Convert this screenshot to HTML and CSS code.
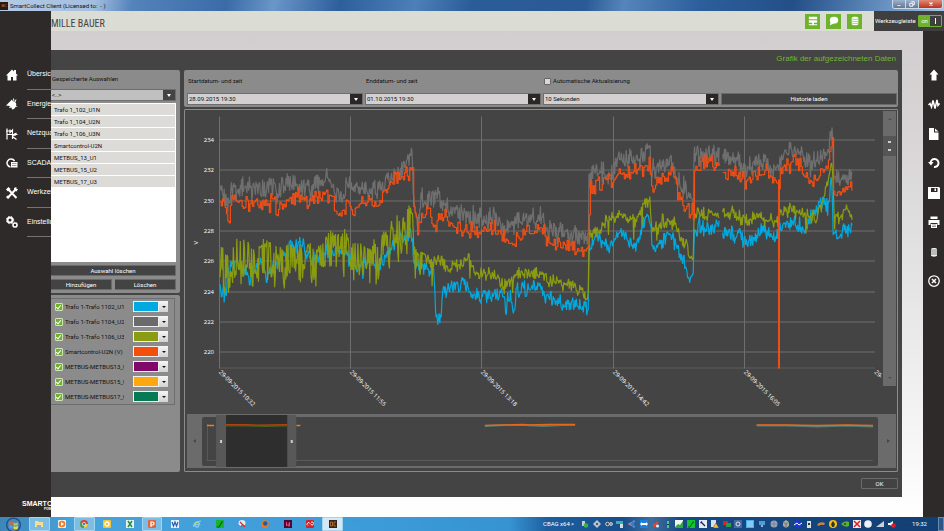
FILE: index.html
```html
<!DOCTYPE html>
<html lang="de">
<head>
    <meta charset="UTF-8">
    <meta name="viewport" content="width=device-width, initial-scale=1.0">
    <title>SmartCollect Client</title>
    <link rel="stylesheet" href="styles.css">
</head>
<body>
    <div class="titlebar">
        <span class="app-icon">BC</span>
        <span class="app-title">SmartCollect Client (Licensed to: &nbsp;- )</span>
        <div class="window-buttons">
            <button class="win-btn" aria-label="Minimieren"><svg viewBox="0 0 8 8"><path d="M1 5h6v2H1z" fill="#fff" stroke="#333" stroke-width=".5"/></svg></button>
            <button class="win-btn" aria-label="Wiederherstellen"><svg viewBox="0 0 8 8"><path d="M3 1h4v4H5M1 3h4v4H1z" fill="none" stroke="#fff" stroke-width="1.2"/></svg></button>
            <button class="win-btn win-close" aria-label="Schließen"><svg viewBox="0 0 8 8"><path d="M2 2l4 4M6 2L2 6" stroke="#fff" stroke-width="1.6"/></svg></button>
        </div>
    </div>

    <div class="app">
        <nav class="sidebar">
            <ul class="nav">
                <li><svg viewBox="0 0 24 24"><path d="M12 1L0 13h3v10h7v-7h4v7h7V13h3l-4-4V2h-4v3z" fill="#fff"/></svg><a href="#">Übersicht</a></li>
                <li><svg viewBox="0 0 24 24"><path d="M0 15L12 3l2 4c5 0 8 4 6 9l4 1-5 1c-1 3-4 5-7 5l-1-4-5 1 2-4z" fill="#fff"/><path d="M15 1l1 6M20 3l-2 5" stroke="#fff" stroke-width="2"/></svg><a href="#">Energie</a></li>
                <li><svg viewBox="0 0 24 24"><path d="M2 1v22M0 6h14M2 13h21M8 3v6l5-5v18M13 17l8 6M21 10l-7 5M18 10v6" fill="none" stroke="#fff" stroke-width="2.4"/></svg><a href="#">Netzqualität</a></li>
                <li><svg viewBox="0 0 24 24"><path d="M9 20a8 8 0 1 1 8-12" fill="none" stroke="#fff" stroke-width="3"/><path d="M10 10h13v11H10z" fill="#fff"/><path d="M12 13h9M12 17h9" stroke="#777" stroke-width="1.4"/></svg><a href="#">SCADA</a></li>
                <li><svg viewBox="0 0 24 24"><path d="M3 22L21 3M3 3l18 19" stroke="#fff" stroke-width="4"/><path d="M0 5l5-5 4 4-5 5zM16 2l5-2-1 4 4 0-3 5-5-2zM0 20l4 4 3-3-4-4z" fill="#fff"/></svg><a href="#">Werkzeuge</a></li>
                <li><svg viewBox="0 0 24 24"><circle cx="8" cy="8" r="5" fill="none" stroke="#fff" stroke-width="4"/><circle cx="18" cy="18" r="4" fill="none" stroke="#fff" stroke-width="3"/><circle cx="8" cy="8" r="7.4" fill="none" stroke="#fff" stroke-width="1.6" stroke-dasharray="3 3"/><circle cx="18" cy="18" r="5.7" fill="none" stroke="#fff" stroke-dasharray="2 2"/></svg><a href="#">Einstellungen</a></li>
            </ul>
            <div class="brand">SMARTCOLLECT<small>POWERED</small></div>
        </nav>

        <main class="content">
            <header class="header">
                <span class="logo">MILLE BAUER</span>
                <button class="head-btn" aria-label="Geräte"><svg viewBox="0 0 12 12"><path d="M1 1h10v3H1zM1 5h10v3H1zM5 8h2v2H5zM1 10h10v1H1z" fill="#fff"/></svg></button>
                <button class="head-btn" aria-label="Meldungen"><svg viewBox="0 0 12 12"><ellipse cx="6" cy="5" rx="5" ry="4" fill="#fff"/><path d="M2 7l-1 4 5-2z" fill="#fff"/></svg></button>
                <button class="head-btn" aria-label="Datenbank"><svg viewBox="0 0 12 12"><path d="M2 2.5c0-2 8-2 8 0v7c0 2-8 2-8 0z" fill="#fff"/><path d="M2 3.500q4 1.500 8 0M2 6q4 1.500 8 0M2 8.500q4 1.500 8 0" fill="none" stroke="#6fb22c" stroke-width=".7"/></svg></button>
                <div class="toolbar-switch">
                    <span>Werkzeugleiste</span>
                    <button class="toggle"><b>on</b><i></i></button>
                </div>
            </header>

            <div class="workspace">
                <section class="dialog">
                    <h1 class="dialog-title">Grafik der aufgezeichneten Daten</h1>

                    <div class="dialog-body">
                        <div class="left-col">
                            <div class="panel saved">
                                <label class="panel-label" for="saved">Gespeicherte Auswahlen</label>
                                <div class="combo combo-grey">
                                    <select id="saved"><option>&lt;..&gt;</option></select>
                                    <span class="combo-arrow"></span>
                                </div>
                                <ul class="list">
                                    <li>Trafo 1_102_U1N</li>
                                    <li>Trafo 1_104_U2N</li>
                                    <li>Trafo 1_106_U3N</li>
                                    <li>Smartcontrol-U2N</li>
                                    <li>METBUS_13_U1</li>
                                    <li>METBUS_15_U2</li>
                                    <li>METBUS_17_U3</li>
                                </ul>
                                <div class="btn-row"><button class="btn">Auswahl löschen</button></div>
                                <div class="btn-row"><button class="btn">Hinzufügen</button><button class="btn">Löschen</button></div>
                            </div>

                            <div class="panel legend-panel">
                                <div class="legend">
                                    <div class="legend-row"><input type="checkbox" id="s1" checked><label for="s1">Trafo 1-Trafo 1102_U1N</label><div class="color-combo"><select class="c-blue" aria-label="Farbe 1"></select><span></span></div></div>
                                    <div class="legend-row"><input type="checkbox" id="s2" checked><label for="s2">Trafo 1-Trafo 1104_U2N</label><div class="color-combo"><select class="c-grey" aria-label="Farbe 2"></select><span></span></div></div>
                                    <div class="legend-row"><input type="checkbox" id="s3" checked><label for="s3">Trafo 1-Trafo 1106_U3N</label><div class="color-combo"><select class="c-olive" aria-label="Farbe 3"></select><span></span></div></div>
                                    <div class="legend-row"><input type="checkbox" id="s4" checked><label for="s4">Smartcontrol-U2N (V)</label><div class="color-combo"><select class="c-orange" aria-label="Farbe 4"></select><span></span></div></div>
                                    <div class="legend-row"><input type="checkbox" id="s5" checked><label for="s5">METBUS-METBUS13_U1</label><div class="color-combo"><select class="c-purple" aria-label="Farbe 5"></select><span></span></div></div>
                                    <div class="legend-row"><input type="checkbox" id="s6" checked><label for="s6">METBUS-METBUS15_U2</label><div class="color-combo"><select class="c-amber" aria-label="Farbe 6"></select><span></span></div></div>
                                    <div class="legend-row"><input type="checkbox" id="s7" checked><label for="s7">METBUS-METBUS17_U3</label><div class="color-combo"><select class="c-green" aria-label="Farbe 7"></select><span></span></div></div>
                                </div>
                            </div>
                        </div>

                        <div class="right-col">
                            <div class="panel filters">
                                <div class="field">
                                    <label for="start">Startdatum- und zeit</label>
                                    <div class="combo"><input type="text" id="start" value="28.09.2015 19:30"><button class="combo-arrow" aria-label="Kalender"></button></div>
                                </div>
                                <div class="field">
                                    <label for="end">Enddatum- und zeit</label>
                                    <div class="combo"><input type="text" id="end" value="01.10.2015 19:30"><button class="combo-arrow" aria-label="Kalender"></button></div>
                                </div>
                                <div class="field">
                                    <label class="auto"><input type="checkbox">Automatische Aktualisierung</label>
                                    <div class="combo"><select aria-label="Intervall"><option>10 Sekunden</option></select><span class="combo-arrow"></span></div>
                                </div>
                                <div class="field field-end"><button class="btn">Historie laden</button></div>
                            </div>

                            <div class="chart-panel">
                                <div class="chart-row">
                                    <svg class="chart" id="chart" viewBox="187 112 696 302"></svg>
                                    <div class="vscroll"><i class="up"></i><div class="thumb"></div><i class="down"></i></div>
                                </div>
                                <div class="overview">
                                    <i class="arrow-left"></i>
                                    <svg viewBox="204 414 675 54" preserveAspectRatio="none">
                                        <rect x="204" y="417" width="674" height="49" rx="2" fill="#444"/>
                                        <path d="M209.500 424v36.500H873" fill="none" stroke="#5a5a5a"/>
                                        <path d="M209 425.500h7M298 425.500h4" stroke="#f07d1e" stroke-width="1.500"/>
                                        <path d="M486 426l20-1 20 0 18 1 20-1 12 0M757 425.500l30 0 30 1 30-1 26 1" fill="none" stroke="#4f7f78" stroke-width="2"/>
                                        <path d="M486 425.500l20-.5 18-.5 6 .5 20-.5 26 0M757 425l30 0 30 .5 30-.5 26 .5" fill="none" stroke="#e8661b" stroke-width="1.300"/>
                                        <rect x="228" y="415" width="62" height="52" fill="#2e2e2e"/>
                                        <path d="M228 425.500h20l20 .5 21-.5" fill="none" stroke="#47601d" stroke-width="2"/>
                                        <path d="M228 424.500h20l10 .5 31-.5" fill="none" stroke="#b2420f"/>
                                        <path d="M218 415h10v52h-10zM289 415h9v52h-9z" fill="#585858"/>
                                        <path d="M222 440h2v3h-2zM292.500 440h2v3h-2z" fill="#ccc"/>
                                    </svg>
                                    <i class="arrow-right"></i>
                                </div>
                            </div>
                        </div>
                    </div>

                    <div class="dialog-footer"><button class="btn btn-ok">OK</button></div>
                </section>
            </div>
        </main>

        <aside class="tools">
            <button aria-label="Hoch"><svg viewBox="0 0 24 24"><path d="M12 1l9 10h-4v12H7V11H3z" fill="#fff"/></svg></button>
            <button aria-label="Kurve"><svg viewBox="0 0 24 24"><path d="M1 14l3-3 3 7 3-13 4 16 4-17 2 11 3-4" fill="none" stroke="#fff" stroke-width="3"/></svg></button>
            <button aria-label="Neu"><svg viewBox="0 0 24 24"><path d="M2 0h10v9h9v15H2zM14 1l7 6h-7z" fill="#fff"/></svg></button>
            <button aria-label="Aktualisieren"><svg viewBox="0 0 24 24"><path d="M5 12a8 8 0 1 1 7 8" fill="none" stroke="#fff" stroke-width="4"/><path d="M0 10h11l-5 7z" fill="#fff"/></svg></button>
            <button aria-label="Speichern"><svg viewBox="0 0 24 24"><path d="M0 0h22l2 2v22H0z" fill="#fff"/><path d="M6 2h13v8H6z" fill="#2e2a29"/><path d="M13 3h3v5h-3z" fill="#fff"/></svg></button>
            <button aria-label="Drucken"><svg viewBox="0 0 24 24"><path d="M5 1h14v5H5zM1 8h22v10h-4v-4H5v4H1zM6 16h12v8H6z" fill="#fff"/><path d="M8 18h8M8 21h8" stroke="#2e2a29"/></svg></button>
            <button aria-label="Datenbank"><svg viewBox="0 0 24 24"><path d="M6 6c0-3 12-3 12 0v13c0 3-12 3-12 0z" fill="#eee"/><path d="M6 8h12M6 12h12M6 16h12" stroke="#666" stroke-width="1.500"/></svg></button>
            <button aria-label="Abbrechen"><svg viewBox="0 0 24 24"><circle cx="12" cy="12" r="10.500" fill="none" stroke="#fff" stroke-width="2.500"/><path d="M8 8l8 8M16 8l-8 8" stroke="#fff" stroke-width="3"/></svg></button>
        </aside>
    </div>

    <footer class="taskbar">
        <button class="start" aria-label="Start"><svg viewBox="0 0 18 16"><circle cx="9" cy="9" r="8.500" fill="#1d4f83"/><circle cx="9" cy="9" r="7" fill="#4d86b8"/><path d="M4 6q3-2 4 0v3q-2-1-4 0z" fill="#e8632c"/><path d="M9 6q2 2 5 0v3q-3 2-5 0z" fill="#a6cf3c"/><path d="M4 10q3-1 4 0v3q-2-1-4 0z" fill="#45a5e8"/><path d="M9 10q2 2 5 0v3q-3 2-5 0z" fill="#f8d53c"/></svg></button>
        <div class="tasks">
            <button class="open" aria-label="Explorer"><svg viewBox="0 0 8 8"><path d="M0 1h3l1 1h4v5H0z" fill="#f3df93"/><path d="M2 5h4v3H2z" fill="#7cb9dc"/></svg></button>
            <button aria-label="Player"><svg viewBox="0 0 8 8"><rect width="8" height="8" rx="1" fill="#eee"/><circle cx="4" cy="4" r="3.300" fill="#f08020"/><path d="M3 2l3 2-3 2z" fill="#fff"/></svg></button>
            <button class="open" aria-label="Chrome"><svg viewBox="0 0 8 8"><circle cx="4" cy="4" r="4" fill="#e03e2f"/><path d="M4 4L.5 2A4 4 0 0 0 4 8z" fill="#3fa650"/><path d="M4 4h4a4 4 0 0 1-4 4z" fill="#f8ce35"/><circle cx="4" cy="4" r="1.700" fill="#3f7ddc" stroke="#fff" stroke-width=".6"/></svg></button>
            <button aria-label="Outlook"><svg viewBox="0 0 8 8"><rect width="8" height="8" rx="1" fill="#f5c435"/><circle cx="4" cy="4" r="2" fill="none" stroke="#fff" stroke-width="1.300"/></svg></button>
            <button aria-label="Excel"><svg viewBox="0 0 8 8"><rect width="8" height="8" fill="#e8f3e8"/><path d="M2 1l4 6M6 1L2 7" stroke="#2b8a45" stroke-width="1.500"/></svg></button>
            <button class="open" aria-label="PowerPoint"><svg viewBox="0 0 8 8"><rect width="8" height="8" rx="1" fill="#e0663c"/><path d="M3 7V2h1.500a1.300 1.300 0 0 1 0 3H3" fill="none" stroke="#fff" stroke-width="1.200"/></svg></button>
            <button aria-label="Word"><svg viewBox="0 0 8 8"><rect width="8" height="8" fill="#e8effa"/><path d="M1 2l1.500 4L4 2l1.500 4L7 2" fill="none" stroke="#2b5fb4" stroke-width="1.200"/></svg></button>
            <button aria-label="Internet Explorer"><svg viewBox="0 0 8 8"><path d="M2 4.500h4.500A2.500 2.500 0 1 0 6 6" fill="none" stroke="#7fd0f5" stroke-width="1.400"/><path d="M0 7Q1 2 8 1" fill="none" stroke="#f2d34a" stroke-width=".8"/></svg></button>
            <button aria-label="Lync"><svg viewBox="0 0 8 8"><rect width="8" height="8" fill="#12b52c"/><path d="M1 7h2l3-5h1" fill="none" stroke="#075a14" stroke-width="1.200"/></svg></button>
            <button aria-label="Snipping"><svg viewBox="0 0 8 8"><ellipse cx="4" cy="3" rx="3.500" ry="3" fill="#e8e8e8"/><path d="M2 2l5 5M5 4L3 7" stroke="#c33" stroke-width="1.200"/></svg></button>
            <button aria-label="Firefox"><svg viewBox="0 0 8 8"><circle cx="4" cy="4" r="3.800" fill="#e87a1e"/><circle cx="4.300" cy="3.500" r="2.200" fill="#2d55a0"/></svg></button>
            <button aria-label="InDesign"><svg viewBox="0 0 8 8"><rect width="8" height="8" fill="#4a0a2c"/><path d="M2.500 2v4M5.500 2v4H4V4h1.500" fill="none" stroke="#e8408c"/></svg></button>
            <button aria-label="Creative Cloud"><svg viewBox="0 0 8 8"><rect width="8" height="8" rx="1" fill="#d8202c"/><path d="M2 5.500a1.500 1.500 0 1 1 2-2l1 1a1.500 1.500 0 1 0 0-2" fill="none" stroke="#fff" stroke-width=".9"/></svg></button>
            <button class="open active" aria-label="SmartCollect"><svg viewBox="0 0 8 8"><rect width="8" height="8" fill="#33241c"/><path d="M1.500 2v4h2V2zM7 2H5v4h2" fill="none" stroke="#c47a3a" stroke-width=".8"/></svg></button>
        </div>
        <div class="tray">
            <span class="tray-text">CBAG x64</span>
            <span class="tray-more">»</span>
            <div class="tray-icons">
                <svg viewBox="0 0 8 8"><path d="M1 1h3v5H1z" fill="#ccc"/><circle cx="5" cy="5.500" r="2.300" fill="#3cb043"/></svg>
                <svg viewBox="0 0 8 8"><path d="M4 0l4 4-4 4-4-4z" fill="#b9c7d4"/><circle cx="4" cy="4" r="1.200" fill="#557"/></svg>
                <svg viewBox="0 0 8 8"><circle cx="2.500" cy="4" r="1.800" fill="#444" stroke="#ccc"/><circle cx="6" cy="4" r="1.400" fill="#666" stroke="#ddd"/></svg>
                <svg viewBox="0 0 8 8"><path d="M0 1h7v3H0z" fill="#38b3ac"/><path d="M4 4h3v4H4z" fill="#d4dde0"/></svg>
                <svg viewBox="0 0 8 8"><path d="M1 4l5-3M1 4l5 3M1 4h5" stroke="#5ba2e8"/><circle cx="1.500" cy="4" r="1.200" fill="#e66"/><circle cx="6" cy="1.500" r="1.200" fill="#58d"/><circle cx="6" cy="6.500" r="1.200" fill="#58d"/></svg>
                <svg viewBox="0 0 8 8"><rect width="8" height="8" fill="#1a7fe0"/><path d="M0 4l2-2v1h4V2l2 2-2 2V5H2v1z" fill="#fff"/></svg>
                <svg viewBox="0 0 8 8"><path d="M1 6q0-3 3-3V1l3 2-2 1q-2 1-2 4z" fill="#e0482c"/><circle cx="5.500" cy="6" r="1.500" fill="#eee"/></svg>
                <svg viewBox="0 0 8 8"><path d="M3 1h2v7H3z" fill="#3cd07a"/><path d="M3 4h2v1H3z" fill="#234"/></svg>
                <svg viewBox="0 0 8 8"><rect width="8" height="8" fill="#eef5ee"/><path d="M0 7l3-3 2 1 3-4v7H0z" fill="#35a545"/></svg>
                <svg viewBox="0 0 8 8"><rect width="8" height="8" fill="#12c52c"/><path d="M1 7h2l3-5h1" fill="none" stroke="#075a14"/></svg>
                <svg viewBox="0 0 8 8"><rect width="8" height="8" fill="#e4ecf6"/><path d="M2 2l4 4M3 1.500L1.500 3" stroke="#225" stroke-width="1.300"/></svg>
                <svg viewBox="0 0 8 8"><path d="M0 0h5v7H0z" fill="#dde"/><path d="M5 3l3 5H2z" fill="#f5c435" stroke="#333" stroke-width=".4"/></svg>
                <svg viewBox="0 0 8 8"><path d="M0 1h5v4H0z" fill="#d22"/><path d="M3 3h5v4H3z" fill="#2a9a45"/></svg>
                <svg viewBox="0 0 8 8"><rect width="8" height="8" fill="#476a9c"/><circle cx="4" cy="4" r="2" fill="none" stroke="#dde"/></svg>
                <svg viewBox="0 0 8 8"><rect width="8" height="8" fill="#4ab0ea"/><path d="M1 2h6M1 4h6M1 6h6" stroke="#bfe4fa"/></svg>
                <svg viewBox="0 0 8 8"><path d="M1 1h6v4H1z" fill="#4b9dd8"/><path d="M3 5h2v2H3z" fill="#aac"/></svg>
                <svg viewBox="0 0 8 8"><circle cx="4" cy="4" r="3.500" fill="#9aa6b5"/><path d="M1 4h6M4 1v6" stroke="#68768a" stroke-width=".6"/></svg>
                <svg viewBox="0 0 8 8"><path d="M4 0l3 2v4L4 8 1 6V2z" fill="#a8a8a0"/><path d="M1 2l3 2 3-2M4 4v4" stroke="#555" stroke-width=".6" fill="none"/></svg>
                <svg viewBox="0 0 8 8"><circle cx="4" cy="4" r="3.800" fill="#1c34d8"/><path d="M0 5l3-2 2 2 3-2" fill="none" stroke="#fff"/></svg>
                <svg viewBox="0 0 8 8"><path d="M2 1h4v7H2z" fill="#ddd"/><path d="M3 3h2v2H3z" fill="#333"/></svg>
                <svg viewBox="0 0 8 8"><path d="M0 5q2-4 8-2l-1 2q-4-1-5 1z" fill="#d8862c"/></svg>
                <svg viewBox="0 0 8 8"><circle cx="4" cy="4" r="4" fill="#f5c012"/><path d="M4 1l2 3-1 3H3L2 4z" fill="#333"/></svg>
                <svg viewBox="0 0 8 8"><path d="M0 4q4-4 8-2v4q-4 2-8-2z" fill="#5fae2e"/><circle cx="4" cy="4" r="1" fill="#1d4a20"/></svg>
                <svg viewBox="0 0 8 8"><rect width="8" height="8" fill="#eee"/><path d="M1 1l6 6M7 1L1 7" stroke="#d8202c" stroke-width="1.500"/></svg>
                <svg viewBox="0 0 8 8"><circle cx="4" cy="4" r="3.800" fill="#eef2f5"/></svg>
                <svg viewBox="0 0 8 8"><path d="M0 7l8-6v6z" fill="#c5d0dc"/></svg>
                <svg viewBox="0 0 8 8"><path d="M0 3h2l3-2v6L2 5H0z" fill="#fff"/><circle cx="5.500" cy="5.500" r="2.300" fill="#d8202c"/></svg>
            </div>
            <span class="clock">19:32</span>
            <button class="show-desktop" aria-label="Desktop anzeigen"></button>
        </div>
    </footer>

    <script src="chart.js"></script>
</body>
</html>
```

FILE: styles.css
```css
* {
    box-sizing: border-box;
}
body {
    margin: 0;
    min-height: 100vh;
    display: flex;
    flex-direction: column;
    font-family: Roboto, "Open Sans", sans-serif;
    font-size: 6px;
    line-height: 8px;
    color: #111;
    background: #fff;
}
button, input, select {
    font: inherit;
    color: inherit;
    margin: 0;
    padding: 0;
    border: 0;
    border-radius: 0;
    appearance: none;
    background: none;
    min-width: 0;
}
ul {
    list-style: none;
    margin: 0;
    padding: 0;
}
svg {
    display: block;
}

/* title bar */
.titlebar {
    display: flex;
    align-items: center;
    height: 11px;
    padding-right: 1px;
    background: linear-gradient(100deg, #b4c9e4 0, #a3bfe0 10%, #5583bb 14%, #3a6ca8 24%, #6a96c8 29%, #2d5f9c 36%, #4d80b8 44%, #2a5c98 50%, #2a5b96 62%, #5585ba 66%, #2c5f9c 74%, #244f88 84%, #6f9ac8 95%, #a9c4e2 100%);
}
.app-icon {
    width: 8px;
    height: 8px;
    background: #2b1a12;
    color: #c87838;
    font-size: 4px;
    text-align: center;
}
.app-title {
    flex: 1;
    padding-left: 2px;
}
.window-buttons {
    display: flex;
    align-self: flex-start;
    height: 9px;
    border: 1px solid #ccd9e8;
    border-top: 0;
    border-radius: 0 0 3px 3px;
    overflow: hidden;
}
.win-btn {
    display: flex;
    width: 13px;
    align-items: center;
    justify-content: center;
    background: linear-gradient(#9db2cb, #60799b);
    border-right: 1px solid #ccd9e8;
}
.win-btn svg {
    width: 6px;
    height: 6px;
}
.win-close {
    width: 23px;
    border-right: 0;
    background: linear-gradient(#dd8c78, #bd3018);
}

.app {
    flex: 1;
    display: grid;
    grid-template-columns: 51px 1fr 21px;
    grid-template-rows: 20px 1fr;
}

/* sidebar */
.sidebar {
    grid-row: 1 / 3;
    display: flex;
    flex-direction: column;
    justify-content: space-between;
    padding: 49px 0 6px;
    overflow: hidden;
    background: #2e2a29;
    color: #fff;
    font-family: "Liberation Sans", sans-serif;
    font-size: 7px;
}
.nav {
    display: flex;
    flex-direction: column;
    height: 177px;
}
.nav li {
    flex: 1;
    display: flex;
    align-items: center;
    gap: 9px;
    padding-left: 6px;
}
.nav svg {
    flex: none;
    width: 12px;
    height: 12px;
}
.nav a {
    flex: 1;
    align-self: stretch;
    display: flex;
    align-items: center;
    border-bottom: 1px solid #77716f;
    color: #fff;
    text-decoration: none;
}
.brand {
    padding-left: 22px;
    font-weight: bold;
}
.brand small {
    display: block;
    padding-left: 22px;
    font-size: 3px;
    line-height: 3px;
}

.content {
    display: contents;
}

/* header */
.header {
    grid-column: 2 / 4;
    display: flex;
    align-items: center;
    background: #dbdcd4;
}
.logo {
    flex: 1;
    padding-top: 5px;
    font-family: "Liberation Sans Narrow", "Roboto Condensed", Roboto, sans-serif;
    font-size: 10px;
    line-height: 12px;
    color: #444;
}
.head-btn {
    display: flex;
    align-items: center;
    justify-content: center;
    width: 15px;
    height: 15px;
    margin-right: 6px;
    background: #6fb22c;
}
.head-btn svg {
    width: 10px;
    height: 10px;
}
.toolbar-switch {
    display: flex;
    align-items: center;
    justify-content: space-between;
    align-self: stretch;
    width: 70px;
    margin-left: 6px;
    padding: 0 2px 0 1px;
    background: #3f3f3f;
    color: #fff;
}
.toggle {
    display: flex;
    width: 24px;
    height: 12px;
    border: 1px solid #6fb22c;
    border-radius: 1px;
}
.toggle b {
    width: 11px;
    font-weight: normal;
    line-height: 10px;
    background: #6fb22c;
}
.toggle i {
    width: 1px;
    height: 6px;
    margin: 2px 0 0 5px;
    background: #fff;
}

/* dialog */
.workspace {
    display: flex;
    padding: 19px 21px 20px 0;
    background: linear-gradient(#d2cecf 0, #d6d4d4 20%, #eee 70%, #fff 100%);
}
.dialog {
    flex: 1;
    display: flex;
    flex-direction: column;
    padding: 2px 4px 8px 0;
    background: #444;
}
.dialog-title {
    margin: 0;
    padding: 1px 2px 5px;
    font-family: "Liberation Sans", sans-serif;
    font-weight: normal;
    font-size: 8px;
    line-height: 12px;
    text-align: right;
    color: #72b633;
}
.dialog-body {
    flex: 1;
    display: grid;
    grid-template-columns: 129px 1fr;
    gap: 4px;
}
.panel {
    background: #8b8b8b;
    border-radius: 2px;
}
.left-col, .right-col {
    display: flex;
    flex-direction: column;
    gap: 2px;
    min-width: 0;
}
.left-col .panel {
    border-radius: 0 2px 2px 0;
}
.saved {
    padding: 5px 4px 3px 0;
}
.panel-label {
    display: block;
    padding-left: 1px;
    margin-bottom: 6px;
}
.combo {
    display: flex;
    height: 12px;
    border: 1px solid #6e6e6e;
    background: #d2d0d0;
}
.combo input, .combo select {
    flex: 1;
    padding-left: 1px;
}
.combo-arrow {
    display: flex;
    align-items: center;
    justify-content: center;
    width: 12px;
    background: #2b2727;
}
.combo-arrow::after {
    content: "";
    border: 2px solid transparent;
    border-top: 3px solid #fff;
    border-bottom: 0;
}
.combo-grey {
    background: #c0c0c0;
    border-left: 0;
}
.combo-grey .combo-arrow {
    background: #444;
}
.list {
    height: 159px;
    margin: 2px 0 3px;
    padding: 1px 1px 0 0;
    background: #fff;
}
.list li {
    height: 11px;
    margin-bottom: 1px;
    padding-left: 3px;
    line-height: 12px;
    background: #dcdbd8;
}
.btn-row {
    display: flex;
    gap: 3px;
    margin-bottom: 3px;
}
.btn-row:last-child {
    margin-bottom: 0;
}
.btn {
    flex: 1;
    height: 11px;
    border: 1px solid #6a6a6a;
    background: #434343;
    color: #fff;
}
.btn-row .btn {
    border-left-width: 0;
}

/* legend */
.legend-panel {
    flex: 1;
    padding: 3px 5px 0 0;
}
.legend {
    padding: 0 6px 0 4px;
    border: 1px solid #6e6e6e;
    border-left: 0;
    border-radius: 1px;
}
.legend-row {
    display: flex;
    align-items: center;
    height: 15px;
}
.legend-row label {
    width: 60px;
    margin: 0 9px 0 2px;
    white-space: nowrap;
    overflow: hidden;
}
.legend-row input {
    display: flex;
    align-items: center;
    justify-content: center;
    width: 8px;
    height: 8px;
    border: 1px solid #d0e4b8;
    border-radius: 1px;
    background: #6fb22c;
}
.legend-row input:checked::after {
    content: "";
    width: 2px;
    height: 4px;
    border: solid #fff;
    border-width: 0 1px 1px 0;
    transform: rotate(40deg);
}
.color-combo {
    display: flex;
    width: 35px;
    height: 11px;
}
.color-combo select {
    width: 26px;
    border: 1px solid #f0f0f0;
}
.color-combo span {
    display: flex;
    flex: 1;
    align-items: center;
    justify-content: center;
    background: linear-gradient(#f6f6f6, #d2d2d2);
}
.color-combo span::after {
    content: "";
    border: 2px solid transparent;
    border-top-color: #111;
    border-bottom: 0;
}
.c-blue { background: #00a9e0; }
.c-grey { background: #6b6b6b; }
.c-olive { background: #8b9c10; }
.c-orange { background: #f44e0c; }
.c-purple { background: #82096c; }
.c-amber { background: #ffa70f; }
.c-green { background: #067a55; }

/* filters */
.filters {
    display: grid;
    grid-template-columns: repeat(4, 1fr);
    gap: 2px;
    padding: 7px 1px 2px 3px;
}
.field {
    display: flex;
    flex-direction: column;
    justify-content: space-between;
    height: 28px;
    min-width: 0;
}
.field label {
    padding-left: 1px;
}
.field .btn {
    flex: none;
    height: 12px;
}
.field-end {
    justify-content: flex-end;
}
.auto {
    display: flex;
    align-items: center;
    gap: 2px;
}
.auto input {
    width: 7px;
    height: 7px;
    border: 1px solid #666;
    border-radius: 1px;
    background: #d8d8d8;
}

/* chart */
.chart-panel {
    flex: 1;
    display: flex;
    flex-direction: column;
    padding: 1px 1px 3px 2px;
    border: 1px solid #8b8b8b;
    border-radius: 1px;
}
.chart-row {
    flex: 1;
    display: flex;
}
.chart {
    flex: 1;
    min-width: 0;
}
.grid {
    stroke: #6e6e6e;
    stroke-width: 1;
    fill: none;
}
.axis-text {
    font-family: "Open Sans", "Noto Sans", sans-serif;
    font-size: 6px;
    fill: #fff;
}
.series {
    fill: none;
    stroke-width: 1.2;
    stroke-linejoin: bevel;
}
.series-blue { stroke: #00a9e0; }
.series-grey { stroke: #6f6f6f; }
.series-olive { stroke: #8b9c10; }
.series-orange { stroke: #f04e14; }
.dropout {
    stroke-width: 2;
}
.vscroll {
    display: flex;
    flex-direction: column;
    align-items: center;
    width: 13px;
    margin-bottom: 28px;
    padding: 7px 0;
    background: #6b6b6b;
}
.vscroll i, .overview i {
    border: 2px solid transparent;
}
.vscroll .up {
    border-bottom-color: #505050;
    border-top: 0;
}
.vscroll .down {
    margin-top: auto;
    border-top-color: #505050;
    border-bottom: 0;
}
.thumb {
    display: flex;
    flex-direction: column;
    align-items: center;
    justify-content: space-evenly;
    align-self: stretch;
    height: 20px;
    margin-top: 16px;
    background: #555;
}
.thumb::before, .thumb::after {
    content: "";
    width: 3px;
    height: 2px;
    background: #ccc;
}
.overview {
    display: flex;
    align-items: center;
    justify-content: space-between;
    height: 54px;
    background: #6b6b6b;
}
.overview svg {
    flex: 1;
    height: 54px;
    min-width: 0;
}
.overview .arrow-left {
    margin: 0 6px 0 6px;
    border-right: 3px solid #484848;
    border-left: 0;
}
.overview .arrow-right {
    margin: 0 6px 0 8px;
    border-left: 3px solid #484848;
    border-right: 0;
}
.dialog-footer {
    display: flex;
    justify-content: flex-end;
    padding-top: 6px;
}
.btn-ok {
    flex: none;
    width: 37px;
    border-radius: 1px;
}

/* right tool strip */
.tools {
    grid-column: 3;
    grid-row: 2;
    display: flex;
    flex-direction: column;
    padding-top: 29px;
    background: #2e2a29;
}
.tools button {
    display: flex;
    align-items: center;
    justify-content: center;
    height: 30px;
    max-height: calc(236px / 8);
}
.tools svg {
    width: 12px;
    height: 12px;
}

/* taskbar */
.taskbar {
    display: flex;
    height: 14px;
    background: linear-gradient(90deg, #3d86b8 0, #49a3dc 8%, #3c9bd8 40%, #3793d2 54%, #1d5f9f 58%, #174f8c 66%, #3f6f9f 69%, #174a86 72%, #123f73 100%);
}
.start {
    width: 28px;
    padding-left: 5px;
}
.start svg {
    width: 17px;
    height: 14px;
}
.tasks {
    display: grid;
    grid-template-columns: repeat(14, 1fr);
    width: 316px;
}
.tasks button {
    display: flex;
    align-items: center;
    justify-content: center;
    margin: 0 1px;
}
.tasks .open {
    border: 1px solid #a5d4ef;
    border-radius: 1px;
    background: #7cbde5;
}
.tasks .active {
    background: #d2e8f6;
}
.tasks svg {
    width: 8px;
    height: 8px;
}
.tray {
    display: flex;
    align-items: center;
    margin-left: auto;
    color: #fff;
}
.tray-text {
    width: 28px;
}
.tray-more {
    width: 8px;
}
.tray-icons {
    display: grid;
    grid-template-columns: repeat(27, 1fr);
    justify-items: center;
    width: 319px;
}
.tray-icons svg {
    width: 8px;
    height: 8px;
}
.clock {
    width: 40px;
    padding-right: 11px;
    text-align: right;
}
.show-desktop {
    align-self: stretch;
    width: 6px;
    border: 1px solid #6a8aad;
    background: #2c5788;
}
```

FILE: chart.js
```javascript
const chart = document.getElementById('chart');
const NS = 'http://www.w3.org/2000/svg';

function add(name, attrs, text) {
    const el = document.createElementNS(NS, name);
    for (const key in attrs) el.setAttribute(key, attrs[key]);
    if (text) el.textContent = text;
    chart.appendChild(el);
}

// seeded random, so the curves are the same on each load
let seed = 7;
function rnd() {
    seed = (seed * 16807) % 2147483647;
    return seed / 2147483647;
}

// grid and axis labels
for (let i = 0; i < 8; i++) {
    const y = 140 + Math.round(i * 30.3);
    add('path', { class: 'grid', d: `M219 ${y}.5H875` });
    add('text', { class: 'axis-text', x: 214, y: y + 2, 'text-anchor': 'end' }, String(234 - i * 2));
}
add('path', { class: 'grid', d: 'M219 368.5H875', opacity: 0.6 });
['10:32', '11:55', '13:18', '14:42', '16:05'].forEach((time, i) => {
    const x = 219.5 + Math.round(i * 131.2);
    add('path', { class: 'grid', d: `M${x} 117V369` });
    add('text', { class: 'axis-text', transform: `translate(${x - 1} 373) rotate(45)` }, '29-09-2015 ' + time);
});
add('text', { class: 'axis-text', transform: 'translate(874 373) rotate(45)' }, '29-');
add('text', { class: 'axis-text', transform: 'translate(198 245) rotate(-90)' }, 'V');

const series = {
    blue: [220,290, 224,293, 228,275, 232,265, 240,265, 250,278, 260,262, 266,275, 275,265, 290,250, 300,245, 312,258, 330,252, 345,250, 350,262, 362,268, 363,286, 364,266, 370,258, 380,265, 390,250, 400,240, 408,235, 411,228, 414,262, 425,270, 432,268, 434,277, 435.5,312, 439,322, 441,315, 443,290, 450,288, 465,285, 475,295, 490,298, 505,296, 506.3,320, 507.5,297, 512,297, 513,315, 515,315, 516,292, 540,287, 546,297, 560,303, 575,306, 587,307, 588.5,310, 589,245, 600,238, 610,248, 620,232, 635,246, 648,215, 651,222, 652,250, 660,242, 672,235, 680,255, 685,265, 689,284, 691,275, 693.5,274, 694,232, 700,225, 712,233, 718,226, 722,234, 740,235, 747,246, 760,230, 775,238, 780,228, 788,222, 800,225, 805,230, 815,210, 824,198, 828,210, 831,182, 832,182, 833,234, 840,236, 846,228, 852,232],
    grey: [220,188, 228,204, 231,188, 275,189, 277,200, 280,188, 295,184, 310,188, 330,180, 336,198, 345,196, 347,185, 355,190, 380,187, 388,178, 400,170, 408,160, 412,158, 414,205, 418,228, 421,200, 425,203, 438,197, 443,208, 460,212, 478,221, 495,219, 505,230, 515,222, 540,219, 548,228, 560,234, 588.5,237, 589,178, 600,174, 613,175, 616,161, 630,160, 644,160, 649,148, 652,170, 664,162, 672,166, 680,185, 690,195, 693.5,202, 694,158, 700,154, 720,154, 735,160, 745,172, 755,162, 770,165, 779,170, 785,152, 800,152, 812,167, 820,158, 828,152, 830,132, 832,130, 833,150, 834,185, 840,182, 845,182, 850,172, 852,177],
    olive: [220,248, 222,246, 224,256, 240,243, 252,252, 262,245, 270,243, 275,253, 290,246, 308,252, 320,250, 328,238, 345,237, 350,245, 370,249, 378,245, 385,235, 395,222, 405,222, 408,212, 412,206, 414,250, 424,253, 430,263, 440,258, 448,268, 460,265, 468,257, 475,275, 490,275, 500,282, 508,286, 515,274, 540,273, 548,281, 560,284, 575,288, 583,292, 588.5,297, 589,235, 600,230, 608,220, 620,216, 635,222, 642,207, 650,201, 652,235, 658,224, 665,222, 675,225, 680,240, 684,243, 690,256, 693.5,258, 694,215, 715,214, 735,214, 745,222, 760,218, 777,223, 780,212, 790,210, 800,213, 815,218, 822,205, 826,190, 831,163, 832.5,165, 834,212, 840,220, 846,208, 852,222],
    orange: [220,204, 223,201, 227,214, 229,220, 231,201, 245,205, 275,203, 277,217, 280,204, 298,197, 310,203, 325,193, 332,197, 336,212, 345,214, 347,197, 353,212, 360,204, 380,205, 385,186, 400,178, 411,172, 412.500,168, 413.5,205, 418,234, 422,215, 430,212, 433,226, 437,222, 444,212, 447,224, 460,229, 478,231, 492,226, 502,236, 512,243, 518,234, 530,234, 543,227, 545,240, 555,245, 568,243, 575,250, 588.5,252, 589.5,190, 592,188, 600,182, 613,182, 617,174, 630,173, 644,172, 649,162, 652,190, 656,183, 665,178, 672,173, 675,185, 682,205, 690,210, 693.5,213, 694,172, 700,163, 718,164, 722,172, 740,175, 743,178, 746,187, 752,180, 768,170, 772,182, 779,182, 780,170, 795,162, 800,165, 803,177, 813,182, 820,175, 828,168, 831,145, 832.5,142, 833.5,195, 840,198, 848,190, 850,180, 852,193]
};

function levelAt(points, x) {
    for (let i = 2; i < points.length; i += 2) {
        if (x <= points[i]) {
            const part = (x - points[i - 2]) / (points[i] - points[i - 2]);
            return points[i - 1] + part * (points[i + 1] - points[i - 1]);
        }
    }
    return points[points.length - 1];
}

function draw(name, step, noise, stairs) {
    const points = series[name];
    let d = '';
    let pen = 'M';
    for (let x = 220; x <= 852.3; x += step) {
        // short recording gap
        if (x > 719.5 && x < 722.5) {
            pen = 'M';
            continue;
        }
        let y = levelAt(points, x) + (rnd() + rnd() - 1) * noise;
        if (name === 'olive' && x < 412 && rnd() < 0.45) {
            y += 14 + rnd() * 23;
        } else if (name === 'olive' && x < 435 && rnd() < 0.3) {
            y += 8 + rnd() * 22;
        } else if (name === 'olive' && rnd() < 0.02) {
            y += 16;
        } else if (name === 'blue' && x < 228) {
            y += (rnd() - 0.5) * 22;
        }
        const yy = y.toFixed(1);
        d += stairs && pen === 'L' ? `H${x.toFixed(1)}V${yy}` : `${pen}${x.toFixed(1)} ${yy}`;
        pen = 'L';
    }
    add('path', { class: `series series-${name}`, d });
}

draw('blue', 0.7, 10);
draw('grey', 0.6, 14);
draw('olive', 0.7, 9);
draw('orange', 1.3, 10, true);
add('path', { class: 'series series-orange dropout', d: 'M779 180V369' });
```
